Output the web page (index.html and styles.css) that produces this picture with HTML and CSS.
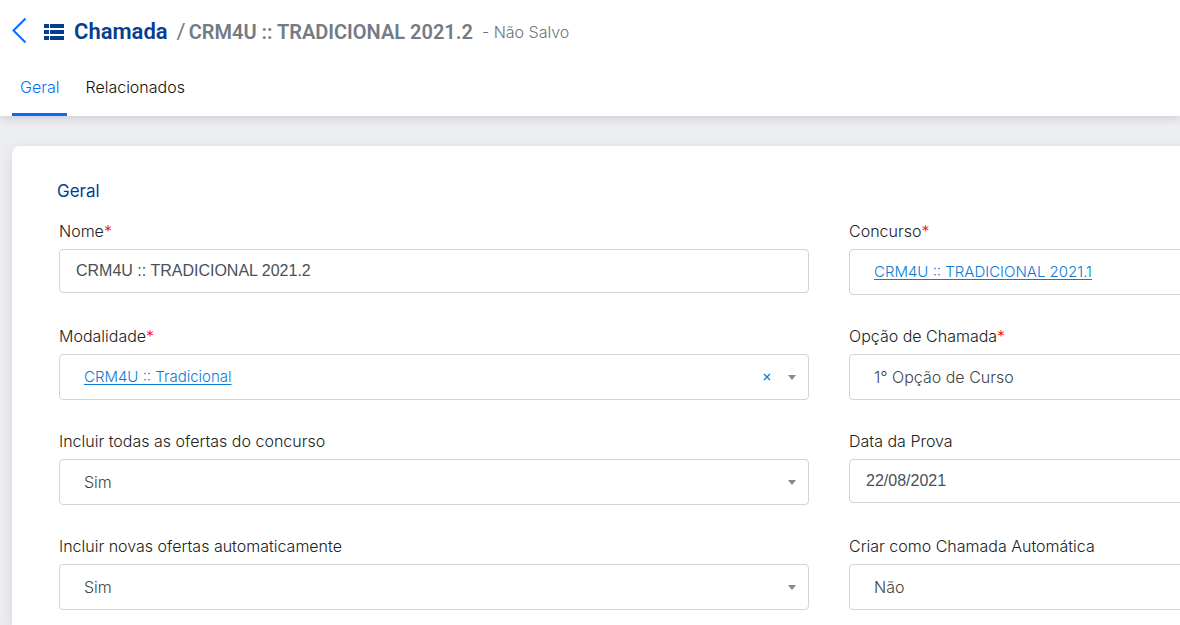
FILE: index.html
```html
<!DOCTYPE html>
<html lang="pt-BR">
<head>
<meta charset="utf-8">
<meta name="viewport" content="width=device-width, initial-scale=1">
<title>Chamada</title>
<link rel="stylesheet" href="styles.css">
</head>
<body>
<header class="header">
  <div class="title-row">
    <button class="back" type="button" aria-label="Voltar">
      <svg width="16" height="26" viewBox="0 0 16 26" fill="none" stroke="currentColor" stroke-width="2"><path d="M13.500 1.500 1.500 13.500l12 12"/></svg>
    </button>
    <svg class="list-icon" width="20" height="16" viewBox="0 0 20 16" fill="currentColor" aria-hidden="true"><path d="M0 0h5v4H0zM6 0h14v4H6zM0 6h5v4H0zM6 6h14v4H6zM0 12h5v4H0zM6 12h14v4H6z"/></svg>
    <h1 class="title"><span class="entity">Chamada</span><span class="slash">/</span><span class="record">CRM4U :: TRADICIONAL 2021.2</span></h1>
    <span class="status">- Não Salvo</span>
  </div>
  <nav class="tabs">
    <a class="tab tab-active" href="#geral">Geral</a>
    <a class="tab" href="#relacionados">Relacionados</a>
  </nav>
</header>
<main class="main">
  <form class="card" id="geral">
    <h2 class="section-title">Geral</h2>
    <div class="fields">
      <div class="field">
        <label class="label" for="nome">Nome<span class="required">*</span></label>
        <input class="control text-input" id="nome" type="text" value="CRM4U :: TRADICIONAL 2021.2">
      </div>
      <div class="field">
        <span class="label" id="concurso-label">Concurso<span class="required">*</span></span>
        <div class="control lookup" role="group" aria-labelledby="concurso-label">
          <a class="lookup-link" href="#concurso">CRM4U :: TRADICIONAL 2021.1</a>
          <button class="clear" type="button" aria-label="Limpar"><svg width="8" height="8" viewBox="0 0 8 8" fill="none" stroke="currentColor" stroke-width="1.3"><path d="m1 1 6 6M7 1 1 7"/></svg></button>
          <button class="open" type="button" aria-label="Abrir"><span class="caret"></span></button>
        </div>
      </div>
      <div class="field">
        <span class="label" id="modalidade-label">Modalidade<span class="required">*</span></span>
        <div class="control lookup" role="group" aria-labelledby="modalidade-label">
          <a class="lookup-link" href="#modalidade">CRM4U :: Tradicional</a>
          <button class="clear" type="button" aria-label="Limpar"><svg width="8" height="8" viewBox="0 0 8 8" fill="none" stroke="currentColor" stroke-width="1.3"><path d="m1 1 6 6M7 1 1 7"/></svg></button>
          <button class="open" type="button" aria-label="Abrir"><span class="caret"></span></button>
        </div>
      </div>
      <div class="field">
        <label class="label" for="opcao">Opção de Chamada<span class="required">*</span></label>
        <div class="select-wrap"><select class="control select" id="opcao"><option>1° Opção de Curso</option></select><span class="caret"></span></div>
      </div>
      <div class="field">
        <label class="label" for="todas">Incluir todas as ofertas do concurso</label>
        <div class="select-wrap"><select class="control select" id="todas"><option>Sim</option><option>Não</option></select><span class="caret"></span></div>
      </div>
      <div class="field">
        <label class="label" for="data">Data da Prova</label>
        <input class="control text-input" id="data" type="text" value="22/08/2021">
      </div>
      <div class="field">
        <label class="label" for="novas">Incluir novas ofertas automaticamente</label>
        <div class="select-wrap"><select class="control select" id="novas"><option>Sim</option><option>Não</option></select><span class="caret"></span></div>
      </div>
      <div class="field">
        <label class="label" for="criar">Criar como Chamada Automática</label>
        <div class="select-wrap"><select class="control select" id="criar"><option>Não</option><option>Sim</option></select><span class="caret"></span></div>
      </div>
    </div>
  </form>
</main>
</body>
</html>
```
FILE: styles.css
```css
* {
  box-sizing: border-box;
}

body {
  margin: 0;
  min-height: 100vh;
  display: flex;
  flex-direction: column;
  overflow-x: hidden;
  background: #edeef1;
  color: #212121;
  font: 300 16px/24px Inter, "Open Sans", sans-serif;
}

button {
  padding: 0;
  border: 0;
  background: none;
  cursor: pointer;
}

.header {
  padding: 0 12px;
  background: #fff;
  box-shadow: 0 1px 10px rgba(0, 0, 0, 0.18);
}

.title-row {
  display: flex;
  align-items: center;
  height: 64px;
}

.back {
  display: flex;
  height: 30px;
  margin-right: 16px;
  color: #0a6cff;
}

.list-icon {
  margin-right: 10px;
  color: #063d91;
}

.title {
  display: flex;
  align-items: baseline;
  margin: 0;
  font: 600 22px/32px Roboto, "Open Sans", sans-serif;
  white-space: nowrap;
}

.entity {
  color: #063d91;
}

.slash {
  margin: 0 3px 0 9px;
  color: #747b85;
  font-weight: 400;
}

.record {
  color: #747b85;
  font-size: 20px;
}

.status {
  margin-left: 9px;
  color: #6c757d;
}

.tabs {
  display: flex;
  gap: 10px;
}

.tab {
  height: 52px;
  padding: 11px 8px 0;
  color: #111;
  text-decoration: none;
}

.tab-active {
  border-bottom: 3px solid #0a6cff;
  color: #0a6cff;
}

.main {
  flex: 1;
  display: flex;
  padding: 30px 0 0 12px;
}

.card {
  flex: 1;
  padding: 33px 47px 15px;
  border-radius: 8px 0 0 0;
  background: #fff;
  box-shadow: 0 4px 16px rgba(0, 0, 0, 0.1);
}

.section-title {
  margin: 0 0 16px -2px;
  color: #063d91;
  font-size: 17px;
  font-weight: 400;
  line-height: 24px;
}

.fields {
  display: grid;
  grid-template-columns: repeat(2, minmax(750px, 1fr));
  gap: 29px 40px;
}

.field {
  display: flex;
  flex-direction: column;
  gap: 6px;
}

.label {
  display: block;
}

.required {
  color: #f00;
}

.control {
  width: 100%;
  height: 46px;
  border: 1px solid #d3d4d8;
  border-radius: 4px;
  background: #fff;
  color: #444;
  font: inherit;
}

.text-input {
  height: 44px;
  padding: 0 16px;
  color: #495057;
  font-family: "Liberation Sans", Arial, sans-serif;
  font-weight: 400;
}

.lookup {
  display: flex;
  align-items: center;
  padding: 0 12px 0 24px;
  font-size: 15px;
}

.lookup-link {
  margin-right: auto;
  color: #0a7bd6;
  text-underline-offset: 2px;
}

.clear {
  display: flex;
  margin-right: 17px;
  color: #0a7bd6;
}

.open {
  display: flex;
}

.caret {
  border: 4px solid transparent;
  border-top: 5px solid #888;
  border-bottom: 0;
}

.select-wrap {
  display: grid;
  align-items: center;
}

.select-wrap > * {
  grid-area: 1 / 1;
}

.select-wrap .caret {
  justify-self: end;
  margin-right: 13px;
  pointer-events: none;
}

.select {
  appearance: none;
  padding: 0 32px 0 24px;
}
```
